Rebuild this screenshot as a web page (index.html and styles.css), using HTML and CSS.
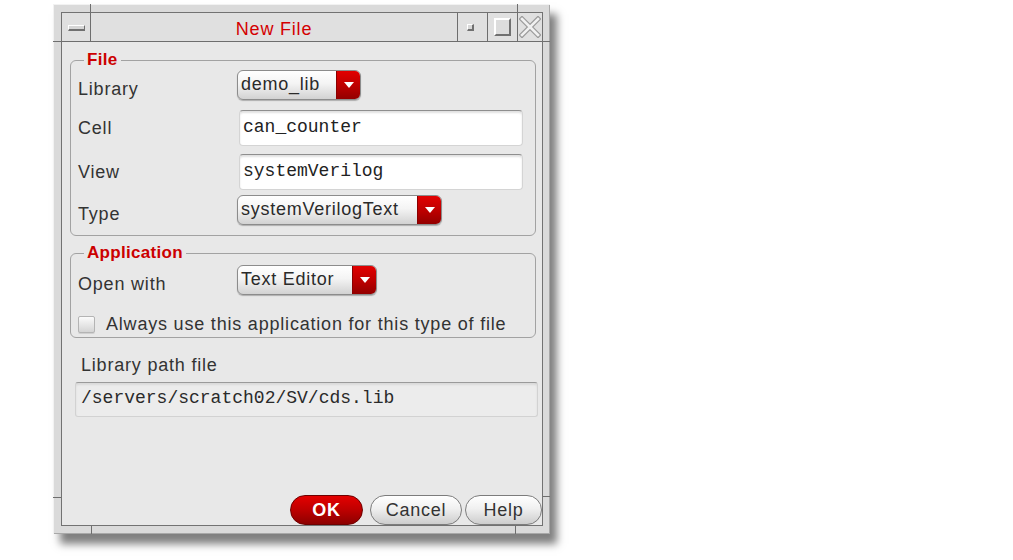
FILE: index.html
```html
<!DOCTYPE html>
<html>
<head>
<meta charset="utf-8">
<title>New File</title>
<link rel="stylesheet" href="styles.css">
</head>
<body>
<div class="desktop">
  <div class="window">
    <span class="tick tick-tl-v"></span>
    <span class="tick tick-tl-h"></span>
    <span class="tick tick-tr-v"></span>
    <span class="tick tick-tr-h"></span>
    <span class="tick tick-bl-h"></span>
    <span class="tick tick-br-h"></span>
    <span class="tick tick-bl-v"></span>
    <span class="tick tick-br-v"></span>
    <div class="client">
      <div class="titlebar">
        <div class="tb-menu"><span class="menu-bar"></span></div>
        <div class="tb-title">New File</div>
        <div class="tb-btn"><span class="min-box"></span></div>
        <div class="tb-btn"><span class="max-box"></span></div>
        <div class="tb-btn tb-close">
          <svg width="22" height="22" viewBox="0 0 22 22">
            <path d="M3 3 L19 19 M19 3 L3 19" stroke="#9a9a9a" stroke-width="5" stroke-linecap="square" fill="none"/>
            <path d="M3 3 L19 19 M19 3 L3 19" stroke="#f0f0f0" stroke-width="2.6" stroke-linecap="square" fill="none"/>
          </svg>
        </div>
      </div>
      <div class="content">
        <fieldset class="group">
          <legend>File</legend>
          <div class="rows">
            <div class="row row-dd">
              <span class="label">Library</span>
              <div class="dd dd-lib"><span class="dd-text">demo_lib</span><span class="dd-arrow"><i class="tri"></i></span></div>
            </div>
            <div class="row row-tf gap10">
              <span class="label">Cell</span>
              <div class="tf">can_counter</div>
            </div>
            <div class="row row-tf gap8">
              <span class="label">View</span>
              <div class="tf">systemVerilog</div>
            </div>
            <div class="row row-dd gap5 last">
              <span class="label">Type</span>
              <div class="dd dd-type"><span class="dd-text">systemVerilogText</span><span class="dd-arrow"><i class="tri"></i></span></div>
            </div>
          </div>
        </fieldset>
        <fieldset class="group group-app">
          <legend>Application</legend>
          <div class="rows">
            <div class="row row-dd gap2">
              <span class="label">Open with</span>
              <div class="dd dd-open"><span class="dd-text">Text Editor</span><span class="dd-arrow"><i class="tri"></i></span></div>
            </div>
            <div class="row row-check">
              <span class="checkbox"></span>
              <span class="check-label">Always use this application for this type of file</span>
            </div>
          </div>
        </fieldset>
        <div class="path-label">Library path file</div>
        <div class="path-field">/servers/scratch02/SV/cds.lib</div>
        <div class="buttons">
          <div class="btn btn-ok">OK</div>
          <div class="btn btn-cancel">Cancel</div>
          <div class="btn btn-help">Help</div>
        </div>
      </div>
    </div>
  </div>
</div>
</body>
</html>
```

FILE: styles.css
```css
* { box-sizing: border-box; }
html, body { margin: 0; padding: 0; background: #ffffff; }
body { font-family: "Liberation Sans", Arial, sans-serif; min-height: 560px; }

.desktop { padding: 4px 0 0 53px; height: 560px; }

.window {
  position: relative;
  width: 497px;
  height: 530px;
  padding: 8px 7px 8px 8px;
  background: #dadada;
  box-shadow: inset 1px 1px 0 #f2f2f2, inset -1px -1px 0 #a8a8a8, 7px 10px 8px rgba(0,0,0,0.5);
}

.tick { position: absolute; background: #6e6e6e; }
.tick-tl-v { left: 37px; top: 0; width: 1px; height: 8px; }
.tick-tl-h { left: 0; top: 37px; width: 8px; height: 1px; }
.tick-tr-v { left: 464px; top: 0; width: 1px; height: 8px; }
.tick-tr-h { right: 0; top: 37px; width: 7px; height: 1px; }
.tick-bl-h { left: 0; top: 493px; width: 8px; height: 1px; }
.tick-br-h { right: 0; top: 492px; width: 7px; height: 1px; }
.tick-bl-v { left: 38px; bottom: 0; width: 1px; height: 8px; }
.tick-br-v { left: 462px; bottom: 0; width: 1px; height: 8px; }

.client {
  height: 100%;
  border: 1px solid #727272;
  background: #e8e8e8;
  display: flex;
  flex-direction: column;
}

.titlebar {
  display: flex;
  height: 29px;
  flex: none;
  border-bottom: 1px solid #6e6e6e;
  background: #e0e0e0;
}
.tb-menu {
  width: 29px;
  border-right: 1px solid #6e6e6e;
  display: flex;
  align-items: center;
  justify-content: center;
  padding-top: 2px;
}
.menu-bar {
  width: 17px;
  height: 6px;
  background: #d6d6d6;
  border-top: 1px solid #ffffff;
  border-left: 1px solid #ffffff;
  border-right: 1px solid #707070;
  border-bottom: 2px solid #707070;
}
.tb-title {
  flex: 1;
  text-align: center;
  color: #d40000;
  font-size: 18px;
  letter-spacing: 0.8px;
  line-height: 29px;
  padding-top: 2px;
}
.tb-btn {
  width: 30px;
  border-left: 1px solid #6e6e6e;
  display: flex;
  align-items: center;
  justify-content: center;
}
.tb-close { width: 25px; }
.min-box {
  width: 7px;
  height: 7px;
  background: #d8d8d8;
  border-top: 1px solid #fff;
  border-left: 1px solid #fff;
  border-right: 2px solid #707070;
  border-bottom: 2px solid #707070;
  margin-right: 4px;
}
.max-box {
  width: 17px;
  height: 18px;
  background: #dcdcdc;
  border-top: 2px solid #ffffff;
  border-left: 2px solid #ffffff;
  border-right: 2px solid #707070;
  border-bottom: 2px solid #707070;
}

.content {
  flex: 1;
  display: flex;
  flex-direction: column;
  padding: 8px 6px 0 8px;
}

.group {
  margin: 0;
  padding: 0;
  min-width: 0;
  border: 1px solid #a2a2a2;
  border-radius: 6px;
}
.group legend {
  margin-left: 13px;
  padding: 0 3px;
  font-weight: bold;
  font-size: 17px;
  line-height: 20px;
  letter-spacing: 0.3px;
  color: #cc0000;
}
.group-app { margin-top: 7px; }

.rows { padding: 0 0 0 7px; }
.row { display: flex; align-items: center; }
.row-dd { height: 30px; }
.row-tf { height: 36px; }
.gap10 { margin-top: 10px; }
.gap8 { margin-top: 8px; }
.gap5 { margin-top: 5px; }
.gap2 { margin-top: 2px; }
.last { margin-bottom: 10px; }

.label, .check-label, .path-label {
  font-size: 18px;
  letter-spacing: 0.8px;
  color: #333333;
}
.label { width: 159px; flex: none; line-height: 20px; }
.row-dd .label { padding-top: 7px; }

.dd {
  display: flex;
  height: 30px;
  border: 1px solid #8c8c8c;
  border-radius: 6px;
  background: linear-gradient(#ffffff, #f4f4f4 45%, #d2d2d2);
  box-shadow: 0 1px 1px rgba(0,0,0,0.25);
  overflow: hidden;
}
.dd-lib { width: 124px; }
.dd-type { width: 205px; }
.dd-open { width: 140px; }
.dd-text {
  flex: 1;
  padding-left: 3px;
  font-size: 18px;
  letter-spacing: 0.75px;
  line-height: 26px;
  color: #2a2a2a;
  white-space: nowrap;
}
.dd-arrow {
  width: 24px;
  flex: none;
  background: linear-gradient(#e20000, #bb0000 55%, #930000);
  border-left: 1px solid #8a0000;
  display: flex;
  align-items: center;
  justify-content: center;
}
.tri {
  width: 0;
  height: 0;
  border-left: 5px solid transparent;
  border-right: 5px solid transparent;
  border-top: 6px solid #ffffff;
}

.tf {
  margin-left: 2px;
  width: 284px;
  height: 36px;
  background: #ffffff;
  border: 1px solid #d4d4d4;
  border-top-color: #8e8e8e;
  border-radius: 4px;
  box-shadow: inset 0 2px 2px rgba(0,0,0,0.12);
  font-family: "Liberation Mono", "Courier New", monospace;
  font-size: 18px;
  line-height: 32px;
  padding-left: 3px;
  color: #222;
}

.row-check { height: 20px; margin-top: 19px; margin-bottom: 3px; }
.checkbox {
  width: 17px;
  height: 17px;
  flex: none;
  border: 1px solid #b4b4b4;
  border-radius: 2px;
  background: linear-gradient(#fbfbfb, #d4d4d4);
  box-shadow: 0 1px 0 rgba(0,0,0,0.1);
  margin-right: 11px;
}
.check-label { line-height: 20px; white-space: nowrap; }

.path-label {
  margin-top: 17px;
  padding-left: 11px;
  line-height: 20px;
}
.path-field {
  margin-top: 7px;
  margin-left: 5px;
  margin-right: -2px;
  height: 35px;
  background: #ececec;
  border: 1px solid #d2d2d2;
  border-top-color: #9a9a9a;
  border-radius: 3px;
  box-shadow: inset 0 2px 2px rgba(0,0,0,0.08);
  font-family: "Liberation Mono", "Courier New", monospace;
  font-size: 18px;
  line-height: 31px;
  padding-left: 5px;
  color: #2a2a2a;
}

.buttons {
  margin-top: auto;
  margin-right: -6px;
  display: flex;
  justify-content: flex-end;
}
.btn {
  height: 30px;
  border-radius: 15px;
  border: 1px solid #7c7c7c;
  background: linear-gradient(#ffffff, #f0f0f0 45%, #cdcdcd);
  display: flex;
  align-items: center;
  justify-content: center;
  font-size: 18px;
  letter-spacing: 0.75px;
  color: #333;
}
.btn-ok {
  width: 73px;
  border-color: #6e0000;
  background: linear-gradient(#e40000, #bd0000 50%, #8c0000);
  color: #ffffff;
  font-weight: bold;
}
.btn-cancel { width: 92px; margin-left: 7px; }
.btn-help { width: 77px; margin-left: 3px; }
```
